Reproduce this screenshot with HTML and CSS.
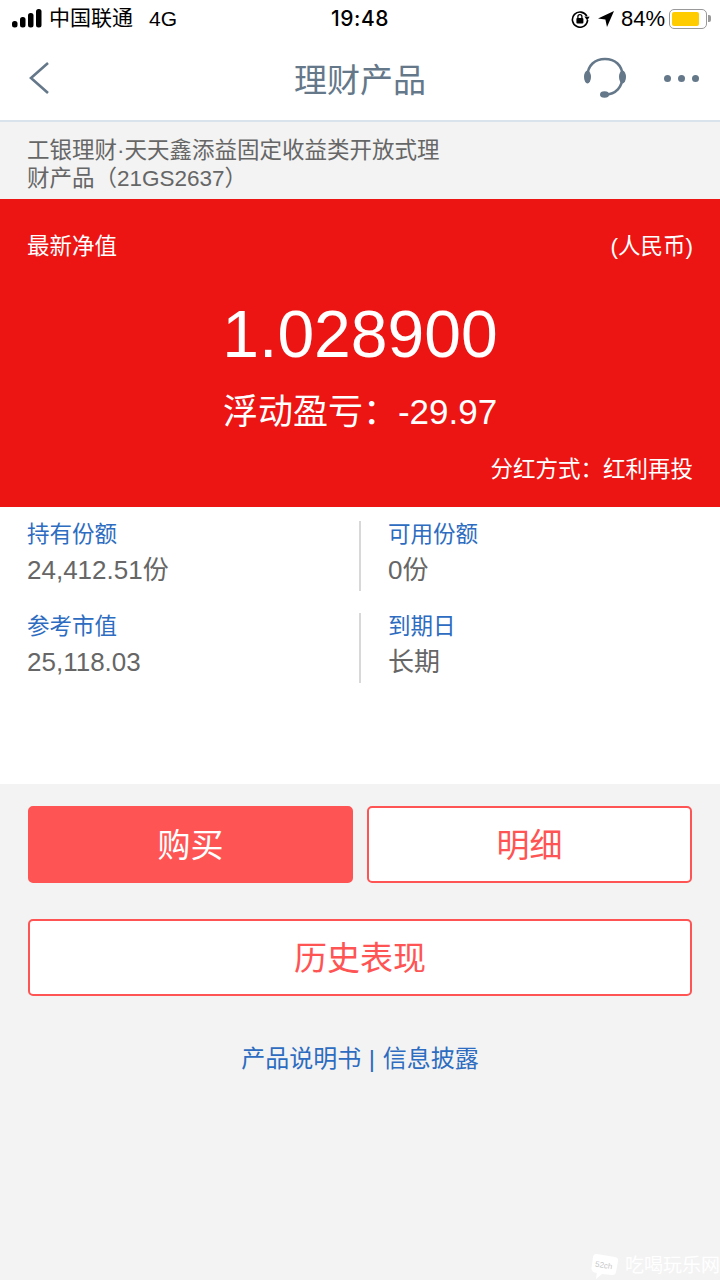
FILE: index.html
```html
<!DOCTYPE html>
<html lang="zh-CN">
<head>
    <meta charset="UTF-8">
    <meta name="viewport" content="width=device-width, initial-scale=1.0">
    <title>理财产品</title>
    <link rel="stylesheet" href="styles.css">
</head>
<body>
    <div class="page">
        <div class="status-bar">
            <div class="status-left">
                <svg class="signal" width="30" height="19" viewBox="0 0 30 19">
                    <rect x="0" y="12" width="5.500" height="6.500" rx="2.500" fill="#000"/>
                    <rect x="8" y="8" width="5.500" height="10.500" rx="2.500" fill="#000"/>
                    <rect x="16" y="4" width="5.500" height="14.500" rx="2.500" fill="#000"/>
                    <rect x="24" y="0" width="5.500" height="18.500" rx="2.500" fill="#000"/>
                </svg>
                <span class="carrier">中国联通</span>
                <span class="network">4G</span>
            </div>
            <div class="status-time">19:48</div>
            <div class="status-right">
                <svg width="20" height="18" viewBox="0 0 20 18">
                    <path d="M15.800 6.200A7.600 7.600 0 1 0 16.600 10" fill="none" stroke="#000" stroke-width="1.600"/>
                    <path d="M13.400 6.600l5.200 .2-2.400 3.600z" fill="#000"/>
                    <rect x="5.400" y="8" width="7" height="5.400" rx="1" fill="#000"/>
                    <path d="M6.900 8V6.600a2 2 0 0 1 4 0V8" fill="none" stroke="#000" stroke-width="1.300"/>
                </svg>
                <svg width="18" height="18" viewBox="0 0 18 18">
                    <path d="M17 1L1 8.600l7.400 .9L10 17z" fill="#000"/>
                </svg>
                <span class="battery-text">84%</span>
                <div class="battery">
                    <div class="battery-body"><div class="battery-level"></div></div>
                    <div class="battery-cap"></div>
                </div>
            </div>
        </div>

        <div class="nav-bar">
            <svg class="nav-back" width="22" height="34" viewBox="0 0 22 34">
                <path d="M20 2L3 17l17 15" fill="none" stroke="#64788a" stroke-width="2.600"/>
            </svg>
            <h1 class="nav-title">理财产品</h1>
            <svg class="nav-service" width="44" height="44" viewBox="0 0 44 44">
                <path d="M4.500 20C4.500 9.500 12 3 22 3s17.500 6.500 17.500 17c0 11-6.500 18.500-17.500 18.500" fill="none" stroke="#64788a" stroke-width="2.600"/>
                <ellipse cx="4.500" cy="21" rx="3.500" ry="6.500" fill="#64788a"/>
                <ellipse cx="39.500" cy="21" rx="3.500" ry="6.500" fill="#64788a"/>
                <ellipse cx="21.500" cy="38.500" rx="4.500" ry="3.200" fill="#64788a"/>
            </svg>
            <div class="nav-more"><i></i><i></i><i></i></div>
        </div>

        <div class="product-name">工银理财·天天鑫添益固定收益类开放式理<br>财产品（21GS2637）</div>

        <div class="value-panel">
            <div class="value-head">
                <span>最新净值</span>
                <span>(人民币)</span>
            </div>
            <div class="value-main">1.028900</div>
            <div class="value-profit">浮动盈亏：-29.97</div>
            <div class="value-foot">分红方式：红利再投</div>
        </div>

        <div class="info">
            <div class="info-row">
                <div class="info-cell">
                    <div class="info-label">持有份额</div>
                    <div class="info-value">24,412.51份</div>
                </div>
                <div class="info-cell">
                    <div class="info-label">可用份额</div>
                    <div class="info-value">0份</div>
                </div>
            </div>
            <div class="info-row">
                <div class="info-cell">
                    <div class="info-label">参考市值</div>
                    <div class="info-value">25,118.03</div>
                </div>
                <div class="info-cell">
                    <div class="info-label">到期日</div>
                    <div class="info-value">长期</div>
                </div>
            </div>
        </div>

        <div class="actions">
            <div class="btn-row">
                <button class="btn btn-solid">购买</button>
                <button class="btn">明细</button>
            </div>
            <button class="btn btn-wide">历史表现</button>
            <div class="links">产品说明书 | 信息披露</div>
        </div>

        <div class="watermark">
            <svg width="29" height="27" viewBox="0 0 29 27">
                <path d="M7 1l18 3q3.500 .6 3 4l-2 11q-.6 3.500-4 3l-10-1-6 5 .8-6q-6-1-5.300-5L3 4q.6-3.500 4-3z" fill="#fff"/>
                <text x="5" y="15" class="watermark-logo-text" transform="rotate(9 14 13)">52ch</text>
            </svg>
            <span>吃喝玩乐网</span>
        </div>
    </div>
</body>
</html>
```

FILE: styles.css
```css
* {
    margin: 0;
    padding: 0;
    box-sizing: border-box;
}

body {
    font-family: "Liberation Sans", "Noto Sans CJK SC", sans-serif;
    background: #f3f3f3;
    text-spacing-trim: space-all;
}

.page {
    position: relative;
    width: 720px;
    height: 1280px;
    overflow: hidden;
    display: flex;
    flex-direction: column;
}

.status-bar {
    height: 37px;
    background: white;
    display: flex;
    align-items: center;
    justify-content: space-between;
    padding: 0 9px 0 12px;
    color: #000;
    font-size: 21px;
    position: relative;
}

.status-left {
    display: flex;
    align-items: center;
}

.signal {
    margin-right: 7px;
    margin-top: -1px;
}

.carrier {
    margin-right: 16px;
    margin-bottom: 5px;
}

.status-time {
    position: absolute;
    left: 0;
    right: 0;
    text-align: center;
    font-family: Inter, sans-serif;
    font-size: 21px;
    font-weight: 500;
    letter-spacing: 0.5px;
}

.status-right {
    display: flex;
    align-items: center;
    gap: 6px;
}

.battery-text {
    font-size: 22px;
    margin-right: -2px;
}

.battery {
    display: flex;
    align-items: center;
}

.battery-body {
    width: 38px;
    height: 20px;
    border: 1.500px solid #999;
    border-radius: 5px;
    padding: 2px;
}

.battery-level {
    width: 27px;
    height: 100%;
    background: #ffcc00;
    border-radius: 2px;
}

.battery-cap {
    width: 3px;
    height: 7px;
    background: #999;
    border-radius: 0 2px 2px 0;
    margin-left: 1px;
}

.nav-bar {
    height: 85px;
    background: white;
    border-bottom: 2px solid #d9e3ec;
    display: flex;
    align-items: center;
    position: relative;
    padding: 0 21px 0 28px;
}

.nav-back {
    margin-bottom: 2px;
}

.nav-title {
    position: absolute;
    left: 0;
    right: 0;
    text-align: center;
    font-size: 33px;
    font-weight: normal;
    color: #64788a;
    margin-top: -2px;
}

.nav-service {
    margin-left: auto;
    margin-right: 37px;
    margin-top: -2px;
}

.nav-more {
    display: flex;
    gap: 7px;
}

.nav-more i {
    width: 7px;
    height: 7px;
    border-radius: 50%;
    background: #64788a;
}

.product-name {
    height: 77px;
    padding: 15px 27px 0;
    font-size: 22.500px;
    line-height: 28px;
    color: #666;
}

.value-panel {
    height: 308px;
    background: #ed1414;
    color: white;
    padding: 0 27px;
}

.value-head {
    display: flex;
    justify-content: space-between;
    padding-top: 33px;
    font-size: 22.500px;
    line-height: 30px;
}

.value-main {
    margin-top: 29px;
    text-align: center;
    font-size: 66px;
    line-height: 86px;
}

.value-profit {
    text-align: center;
    font-size: 35px;
    line-height: 44px;
    margin-top: 13px;
}

.value-foot {
    text-align: right;
    font-size: 22.500px;
    line-height: 30px;
    margin-top: 21px;
}

.info {
    height: 277px;
    background: white;
    padding-top: 14px;
    display: flex;
    flex-direction: column;
    gap: 22px;
}

.info-row {
    display: flex;
    height: 70px;
}

.info-cell {
    width: 360px;
    padding-left: 27px;
}

.info-cell + .info-cell {
    border-left: 2px solid #d8d8d8;
    padding-left: 27px;
    margin-left: -1px;
}

.info-label {
    font-size: 22.500px;
    line-height: 28px;
    color: #2d6cc0;
}

.info-value {
    font-size: 26px;
    line-height: 36px;
    margin-top: 3px;
    color: #666;
}

.actions {
    padding: 22px 28px 0;
}

.btn-row {
    display: flex;
    gap: 14px;
    margin-bottom: 36px;
}

.btn {
    flex: 1;
    height: 77px;
    background: white;
    border: 2px solid #ff5454;
    border-radius: 5px;
    color: #ff5454;
    font-family: inherit;
    font-size: 33px;
    padding-bottom: 3px;
}

.btn-solid {
    background: #ff5454;
    color: white;
}

.btn-wide {
    display: block;
    width: 100%;
}

.links {
    margin-top: 46px;
    text-align: center;
    font-size: 24px;
    line-height: 34px;
    word-spacing: 1px;
    color: #2d6cc0;
}

.watermark {
    position: absolute;
    right: 0;
    bottom: 0;
    display: flex;
    align-items: center;
    gap: 6px;
    color: white;
    font-size: 19px;
    line-height: 28px;
}

.watermark-logo-text {
    font-size: 8px;
    fill: #c8c8c8;
}
```
